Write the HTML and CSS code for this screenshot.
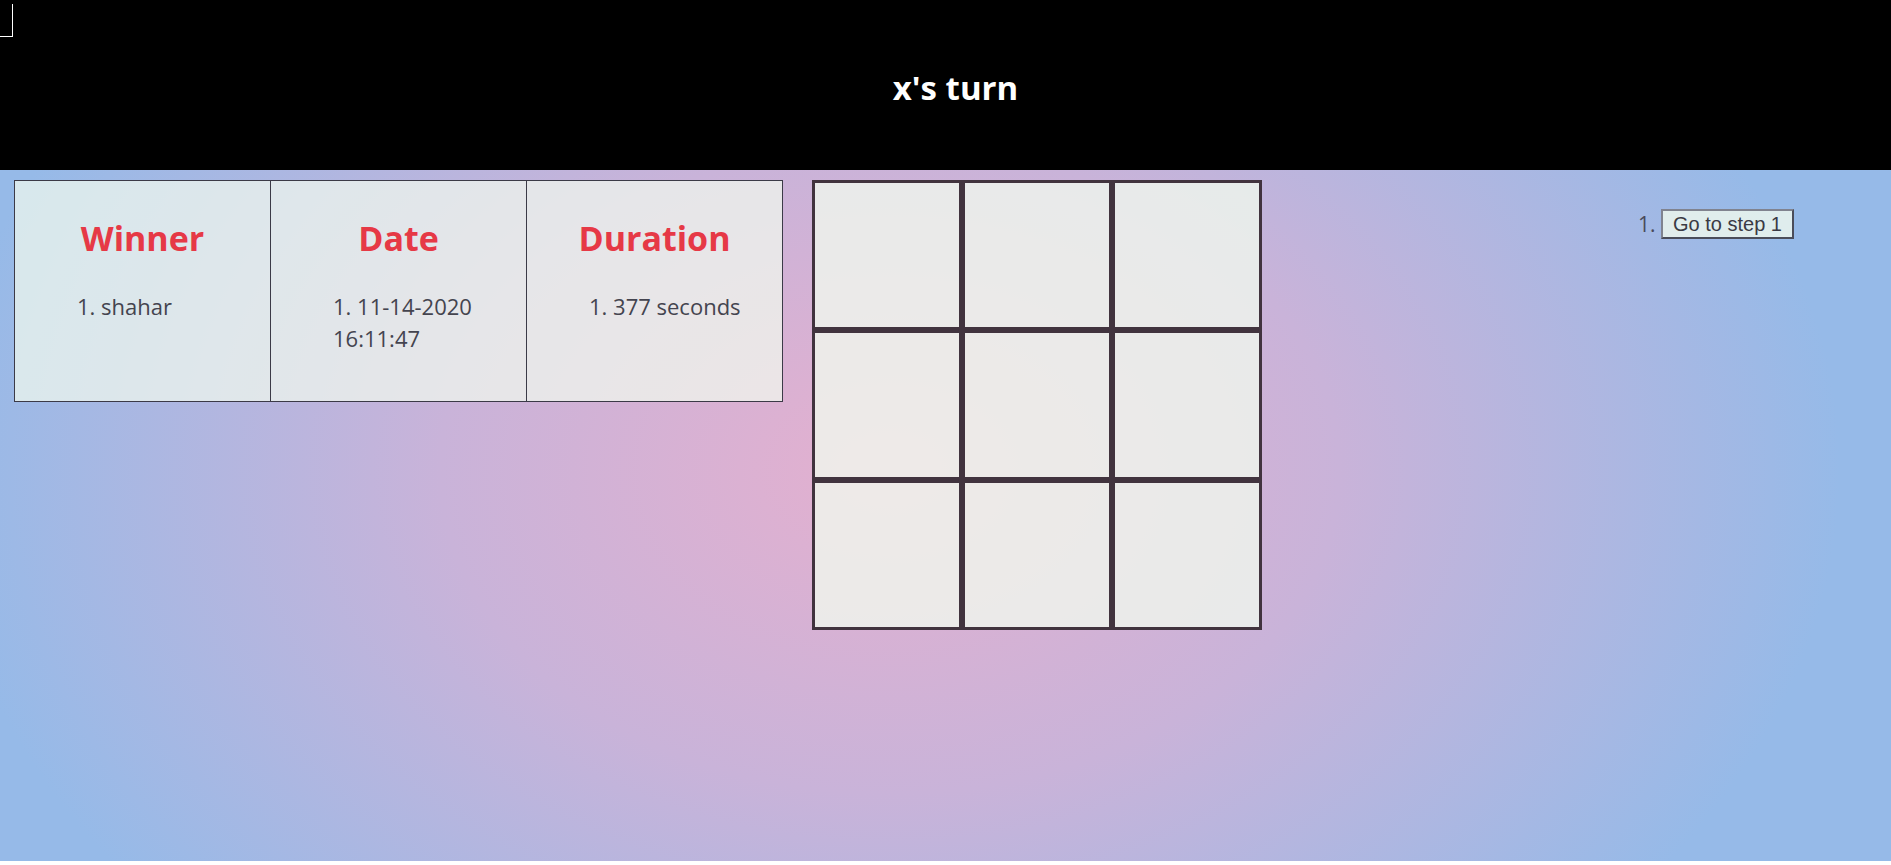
FILE: index.html
```html
<!DOCTYPE html>
<html lang="en">
<head>
<meta charset="utf-8">
<title>Tic Tac Toe</title>
<link rel="stylesheet" href="styles.css">
</head>
<body>
<div class="app">
  <div class="corner"></div>
  <header class="topbar">
    <h1 class="status">x's turn</h1>
  </header>
  <main class="game">
    <section class="history">
      <div class="col">
        <h2 class="col-title">Winner</h2>
        <ol class="col-list"><li>shahar</li></ol>
      </div>
      <div class="col">
        <h2 class="col-title">Date</h2>
        <ol class="col-list"><li>11-14-2020 16:11:47</li></ol>
      </div>
      <div class="col">
        <h2 class="col-title">Duration</h2>
        <ol class="col-list"><li>377 seconds</li></ol>
      </div>
    </section>
    <section class="board">
      <button class="square"></button>
      <button class="square"></button>
      <button class="square"></button>
      <button class="square"></button>
      <button class="square"></button>
      <button class="square"></button>
      <button class="square"></button>
      <button class="square"></button>
      <button class="square"></button>
    </section>
    <section class="info">
      <ol class="moves"><li><button class="move-btn">Go to step 1</button></li></ol>
    </section>
  </main>
</div>
</body>
</html>
```
FILE: styles.css
```css
html, body {
  margin: 0;
  padding: 0;
  background: #fff;
}
body {
  font-family: "Open Sans", "Noto Sans", sans-serif;
}
.app {
  position: relative;
  height: 861px;
  background: radial-gradient(ellipse 1000px 720px at 890px 470px, #e4b0cf 0%, #c9b3d9 45%, #96bae8 95%, #96bae8 100%);
}
.corner {
  position: absolute;
  left: 0;
  top: 4px;
  width: 12px;
  height: 32px;
  border-right: 1px solid #fff;
  border-bottom: 1px solid #fff;
}
.topbar {
  height: 170px;
  background: #000;
  display: flex;
  justify-content: center;
  padding-left: 20px;
  box-sizing: border-box;
}
.status {
  margin: 0;
  padding-top: 66px;
  font-size: 33px;
  line-height: 44px;
  font-weight: 700;
  color: #fff;
}
.game {
  display: flex;
  align-items: flex-start;
  padding: 10px 0 0 14px;
}
.history {
  display: flex;
  border: 1px solid #3b3a47;
  background: rgba(241, 250, 238, 0.72);
}
.col {
  width: 255px;
  height: 220px;
  box-sizing: border-box;
  padding-top: 35px;
}
.col + .col {
  width: 256px;
  border-left: 1px solid #3b3a47;
}
.col-title {
  margin: 0;
  text-align: center;
  font-size: 34px;
  line-height: 44px;
  font-weight: 700;
  color: #e63946;
}
.col-list {
  margin: 30px 0 0 0;
  padding: 0 0 0 62px;
  list-style-position: inside;
  font-size: 22px;
  line-height: 32px;
  color: #44444f;
}
.board {
  display: grid;
  grid-template-columns: repeat(3, 150px);
  grid-template-rows: repeat(3, 150px);
  margin-left: 29px;
}
.square {
  box-sizing: border-box;
  margin: 0;
  padding: 0;
  border: 3px solid #41333e;
  background: rgba(241, 250, 238, 0.78);
}
.info {
  margin-left: 359px;
}
.moves {
  margin: 29px 0 0 0;
  padding-left: 40px;
  font-size: 21px;
  line-height: 30px;
  color: #4a4a5a;
}
.move-btn {
  font-family: "Liberation Sans", Arial, sans-serif;
  font-size: 20px;
  line-height: 22px;
  height: 30px;
  padding: 0 10px;
  margin: 0;
  color: #3a3a44;
  background: rgba(241, 250, 238, 0.8);
  border-width: 2px;
  border-style: solid;
  border-color: #80838f #4a4d5a #4a4d5a #80838f;
  vertical-align: top;
}
```
